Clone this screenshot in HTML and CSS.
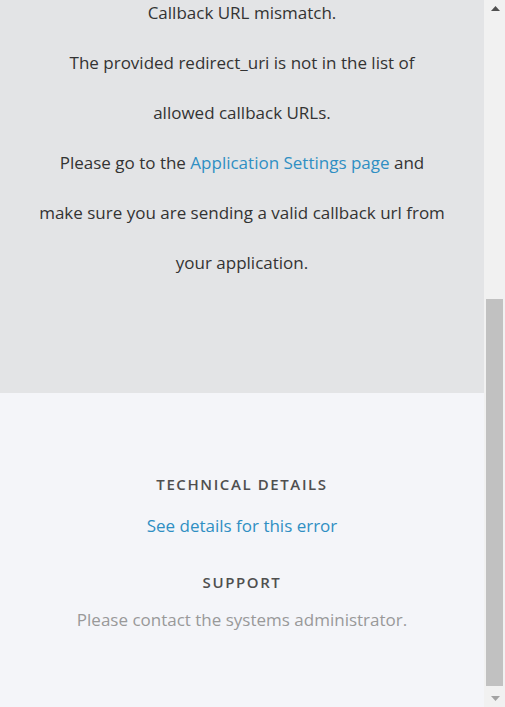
FILE: index.html
```html
<!DOCTYPE html>
<html lang="en">
<head>
<meta charset="utf-8">
<title>Callback URL mismatch</title>
<link rel="stylesheet" href="styles.css">
</head>
<body>
<div class="window">
  <main class="viewport">
    <section class="error-box">
      <p class="message">Callback URL mismatch.</p>
      <p class="message">The provided redirect_uri is not in the list of</p>
      <p class="message">allowed callback URLs.</p>
      <p class="message">Please go to the <a class="link" href="#">Application Settings page</a> and</p>
      <p class="message">make sure you are sending a valid callback url from</p>
      <p class="message">your application.</p>
    </section>
    <section class="details">
      <h3 class="details-title">TECHNICAL DETAILS</h3>
      <a class="link details-link" href="#">See details for this error</a>
      <h3 class="details-title support-title">SUPPORT</h3>
      <p class="support-text">Please contact the systems administrator.</p>
    </section>
  </main>
  <div class="scrollbar">
    <div class="sb-btn">
      <svg width="9" height="5" viewBox="0 0 9 5"><polygon points="0,5 4.5,0 9,5" fill="#505050"/></svg>
    </div>
    <div class="sb-track">
      <div class="sb-thumb"></div>
    </div>
    <div class="sb-btn">
      <svg width="9" height="5" viewBox="0 0 9 5"><polygon points="0,0 9,0 4.5,5" fill="#a3a3a3"/></svg>
    </div>
  </div>
</div>
</body>
</html>
```

FILE: styles.css
```css
* {
  box-sizing: border-box;
}

html, body {
  margin: 0;
  padding: 0;
  height: 707px;
  overflow: hidden;
}

body {
  font-family: "Open Sans", "Lato", "Liberation Sans", sans-serif;
  color: #333333;
}

.window {
  display: flex;
  height: 707px;
}

.viewport {
  flex: 1;
  display: flex;
  flex-direction: column;
  justify-content: flex-end;
  overflow: hidden;
}

.error-box {
  flex-shrink: 0;
  background: #e3e4e6;
  padding: 40px 0 105px;
  text-align: center;
}

.message {
  margin: 0;
  font-size: 17px;
  line-height: 50px;
  white-space: nowrap;
}

.link {
  color: #2f8fc3;
  text-decoration: none;
}

.details {
  flex-shrink: 0;
  height: 314px;
  background: #f4f5f9;
  display: flex;
  flex-direction: column;
  align-items: center;
  padding-top: 81px;
}

.details-title {
  margin: 0;
  font-size: 15px;
  line-height: 20px;
  font-weight: 600;
  letter-spacing: 1.6px;
  color: #4f4f4f;
}

.details-link {
  margin-top: 20px;
  font-size: 17px;
  line-height: 24px;
}

.support-title {
  margin-top: 34px;
}

.support-text {
  margin: 16px 0 0;
  font-size: 17px;
  line-height: 24px;
  color: #999999;
}

.scrollbar {
  width: 21px;
  flex-shrink: 0;
  background: #f1f1f1;
  display: flex;
  flex-direction: column;
}

.sb-btn {
  height: 17px;
  display: flex;
  align-items: center;
  justify-content: center;
  padding-left: 1px;
}

.sb-btn svg {
  display: block;
}

.sb-track {
  flex: 1;
  display: flex;
  flex-direction: column;
  justify-content: flex-end;
  padding: 0 2px 4px;
}

.sb-thumb {
  height: 387px;
  background: #c1c1c1;
}
```
